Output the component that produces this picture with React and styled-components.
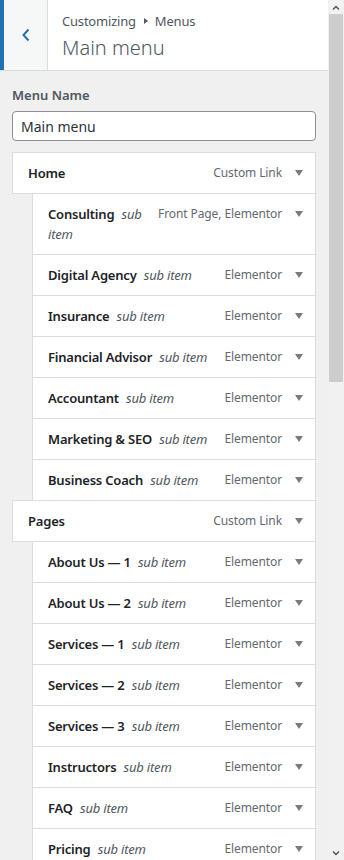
import styled, { createGlobalStyle } from "styled-components";

const GlobalStyle = createGlobalStyle`
  html, body {
    margin: 0;
    padding: 0;
    background: #f0f0f1;
  }
  body {
    font-family: "Noto Sans", "Liberation Sans", sans-serif;
    -webkit-font-smoothing: antialiased;
  }
`;

const Frame = styled.div`
  display: flex;
  width: 344px;
  height: 860px;
  overflow: hidden;
`;

const Panel = styled.div`
  flex: 1;
  min-width: 0;
  display: flex;
  flex-direction: column;
  background: #f0f0f1;
`;

const Header = styled.div`
  display: flex;
  height: 70px;
  background: #fff;
  border-bottom: 1px solid #dcdcde;
  flex: none;
`;

const BackButton = styled.button`
  width: 48px;
  flex: none;
  display: flex;
  align-items: center;
  justify-content: center;
  background: #f6f7f7;
  border: none;
  border-left: 4px solid #2271b1;
  border-right: 1px solid #dcdcde;
  padding: 0;
  color: #2271b1;
`;

const HeaderText = styled.div`
  display: flex;
  flex-direction: column;
  padding: 11px 14px 0;
`;

const Crumb = styled.span`
  display: flex;
  align-items: center;
  font-size: 13px;
  line-height: 20px;
  color: #50575e;
  letter-spacing: -0.2px;
`;

const CrumbArrow = styled.span`
  display: inline-block;
  width: 0;
  height: 0;
  border-top: 3px solid transparent;
  border-bottom: 3px solid transparent;
  border-left: 4px solid #50575e;
  margin: 0 7px 0 8px;
`;

const Title = styled.h2`
  margin: 5px 0 0;
  font-size: 20px;
  font-weight: 300;
  line-height: 24px;
  color: #50575e;
`;

const Body = styled.div`
  padding: 16px 12px 0;
  display: flex;
  flex-direction: column;
`;

const Label = styled.label`
  font-size: 13px;
  font-weight: 600;
  color: #50575e;
  line-height: 18px;
  margin-top: -1px;
`;

const NameInput = styled.div`
  margin-top: 7px;
  height: 28px;
  border: 1px solid #8c8f94;
  border-radius: 4px;
  background: #fff;
  display: flex;
  align-items: center;
  padding: 0 8px;
  font-size: 14px;
  color: #2c3338;
`;

const List = styled.ul`
  list-style: none;
  margin: 11px 0 0;
  padding: 0;
`;

const Item = styled.li`
  display: flex;
  align-items: flex-start;
  margin-left: ${(p) => (p.$sub ? "20px" : "0")};
  margin-top: -1px;
  &:first-child {
    margin-top: 0;
  }
  padding: 10px 10px 10px 15px;
  background: #fff;
  border: 1px solid #dcdcde;
`;

const ItemTitle = styled.span`
  flex: 1;
  min-width: 0;
  font-size: 13px;
  font-weight: 600;
  line-height: 20px;
  color: #1d2327;
  letter-spacing: -0.2px;
`;

const SubNote = styled.em`
  font-weight: 400;
  color: #50575e;
  margin-left: 4px;
`;

const Controls = styled.span`
  flex: none;
  display: flex;
  align-items: center;
  gap: 13px;
  margin-left: 8px;
  font-size: 12px;
  line-height: 20px;
  color: #646970;
  letter-spacing: -0.1px;
`;

const Arrow = styled.span`
  display: inline-block;
  width: 0;
  height: 0;
  border-left: 4px solid transparent;
  border-right: 4px solid transparent;
  border-top: 6px solid #787c82;
  margin-right: 2px;
`;

const Scrollbar = styled.div`
  width: 16px;
  flex: none;
  display: flex;
  flex-direction: column;
  background: #f1f1f1;
`;

const ScrollButton = styled.div`
  height: 14px;
  display: flex;
  align-items: center;
  justify-content: center;
  color: #505050;
`;

const Thumb = styled.div`
  height: 368px;
  margin: 0 1px;
  background: #cdcdcd;
`;

const Spacer = styled.div`
  flex: 1;
`;

const items = [
  { name: "Home", type: "Custom Link" },
  { name: "Consulting", type: "Front Page, Elementor", sub: true },
  { name: "Digital Agency", type: "Elementor", sub: true },
  { name: "Insurance", type: "Elementor", sub: true },
  { name: "Financial Advisor", type: "Elementor", sub: true },
  { name: "Accountant", type: "Elementor", sub: true },
  { name: "Marketing & SEO", type: "Elementor", sub: true },
  { name: "Business Coach", type: "Elementor", sub: true },
  { name: "Pages", type: "Custom Link" },
  { name: "About Us — 1", type: "Elementor", sub: true },
  { name: "About Us — 2", type: "Elementor", sub: true },
  { name: "Services — 1", type: "Elementor", sub: true },
  { name: "Services — 2", type: "Elementor", sub: true },
  { name: "Services — 3", type: "Elementor", sub: true },
  { name: "Instructors", type: "Elementor", sub: true },
  { name: "FAQ", type: "Elementor", sub: true },
  { name: "Pricing", type: "Elementor", sub: true },
];

export default function App() {
  return (
    <Frame>
      <GlobalStyle />
      <Panel>
        <Header>
          <BackButton aria-label="Back">
            <svg width="10" height="14" viewBox="0 0 10 14">
              <path d="M7.5 1.5 L2.5 7 L7.5 12.5" fill="none" stroke="currentColor" strokeWidth="2" />
            </svg>
          </BackButton>
          <HeaderText>
            <Crumb>
              Customizing
              <CrumbArrow />
              Menus
            </Crumb>
            <Title>Main menu</Title>
          </HeaderText>
        </Header>
        <Body>
          <Label>Menu Name</Label>
          <NameInput>Main menu</NameInput>
          <List>
            {items.map((it) => (
              <Item key={it.name} $sub={it.sub}>
                <ItemTitle>
                  {it.name}{" "}
                  {it.sub && <SubNote>sub item</SubNote>}
                </ItemTitle>
                <Controls>
                  {it.type}
                  <Arrow />
                </Controls>
              </Item>
            ))}
          </List>
        </Body>
      </Panel>
      <Scrollbar>
        <ScrollButton>
          <svg width="8" height="5" viewBox="0 0 8 5">
            <path d="M1 4.5 L4 1.5 L7 4.5" fill="none" stroke="currentColor" strokeWidth="1.4" />
          </svg>
        </ScrollButton>
        <Thumb />
        <Spacer />
        <ScrollButton>
          <svg width="8" height="5" viewBox="0 0 8 5">
            <path d="M1 0.5 L4 3.5 L7 0.5" fill="none" stroke="currentColor" strokeWidth="1.4" />
          </svg>
        </ScrollButton>
      </Scrollbar>
    </Frame>
  );
}
